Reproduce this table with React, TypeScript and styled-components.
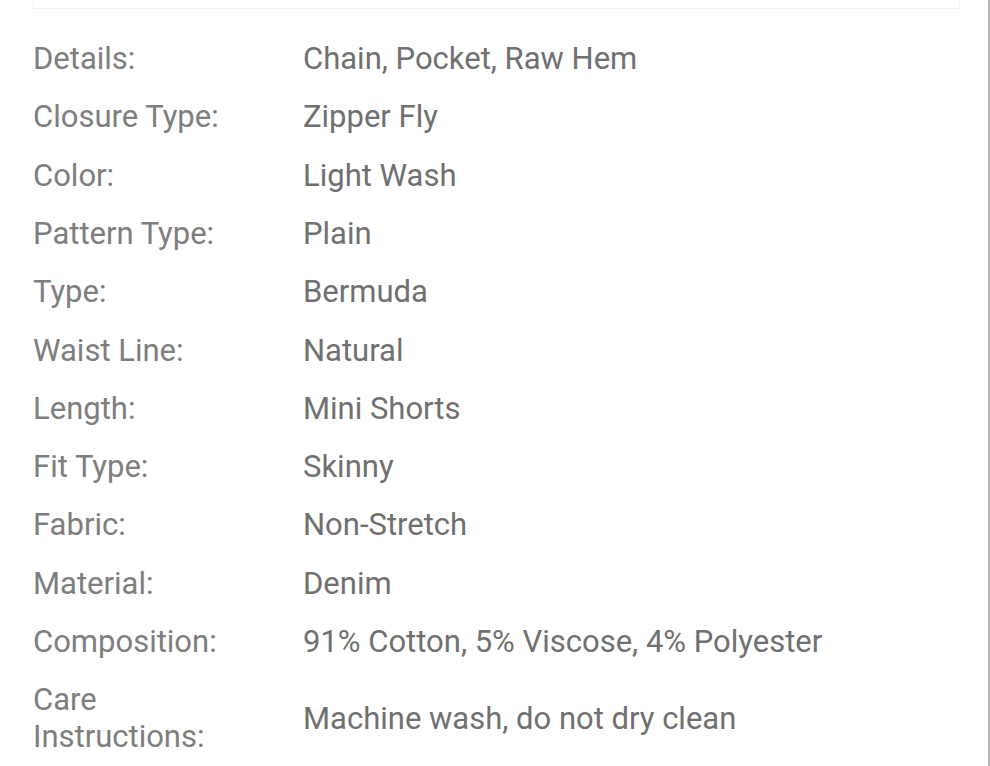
import React from 'react'
import styled, { createGlobalStyle } from 'styled-components'

const GlobalStyle = createGlobalStyle`
  html, body {
    margin: 0;
    padding: 0;
    background: #fff;
  }
  body {
    font-family: Roboto, 'Noto Sans', sans-serif;
  }
`

const Page = styled.div`
  width: 990px;
  height: 766px;
  border-right: 2px solid #b4b4b4;
  overflow: hidden;
  padding: 0 28px 0 33px;
  box-sizing: border-box;
`

const NoticeBox = styled.div`
  height: 8px;
  border: 1px solid #faf4e6;
  border-top: none;
  background: #fff;
`

const SpecTable = styled.dl`
  margin: 20.5px 0 0;
  padding: 0;
`

const Row = styled.div`
  display: grid;
  grid-template-columns: 270px 1fr;
  align-items: center;
  padding: 10.65px 0;
  font-size: 31px;
  line-height: 37px;
`

const Label = styled.dt`
  margin: 0;
  color: #7e7e7e;
`

const Value = styled.dd`
  margin: 0;
  color: #707070;
`

const CareLabel = styled.span`
  display: block;
  width: 200px;
`

const specs: [string, string][] = [
  ['Details:', 'Chain, Pocket, Raw Hem'],
  ['Closure Type:', 'Zipper Fly'],
  ['Color:', 'Light Wash'],
  ['Pattern Type:', 'Plain'],
  ['Type:', 'Bermuda'],
  ['Waist Line:', 'Natural'],
  ['Length:', 'Mini Shorts'],
  ['Fit Type:', 'Skinny'],
  ['Fabric:', 'Non-Stretch'],
  ['Material:', 'Denim'],
  ['Composition:', '91% Cotton, 5% Viscose, 4% Polyester'],
  ['Care Instructions:', 'Machine wash, do not dry clean'],
]

export default function App() {
  return (
    <>
      <GlobalStyle />
      <Page>
        <NoticeBox />
        <SpecTable>
          {specs.map(([label, value]) => (
            <Row key={label}>
              <Label>
                {label.startsWith('Care') ? <CareLabel>{label}</CareLabel> : label}
              </Label>
              <Value>{value}</Value>
            </Row>
          ))}
        </SpecTable>
      </Page>
    </>
  )
}
